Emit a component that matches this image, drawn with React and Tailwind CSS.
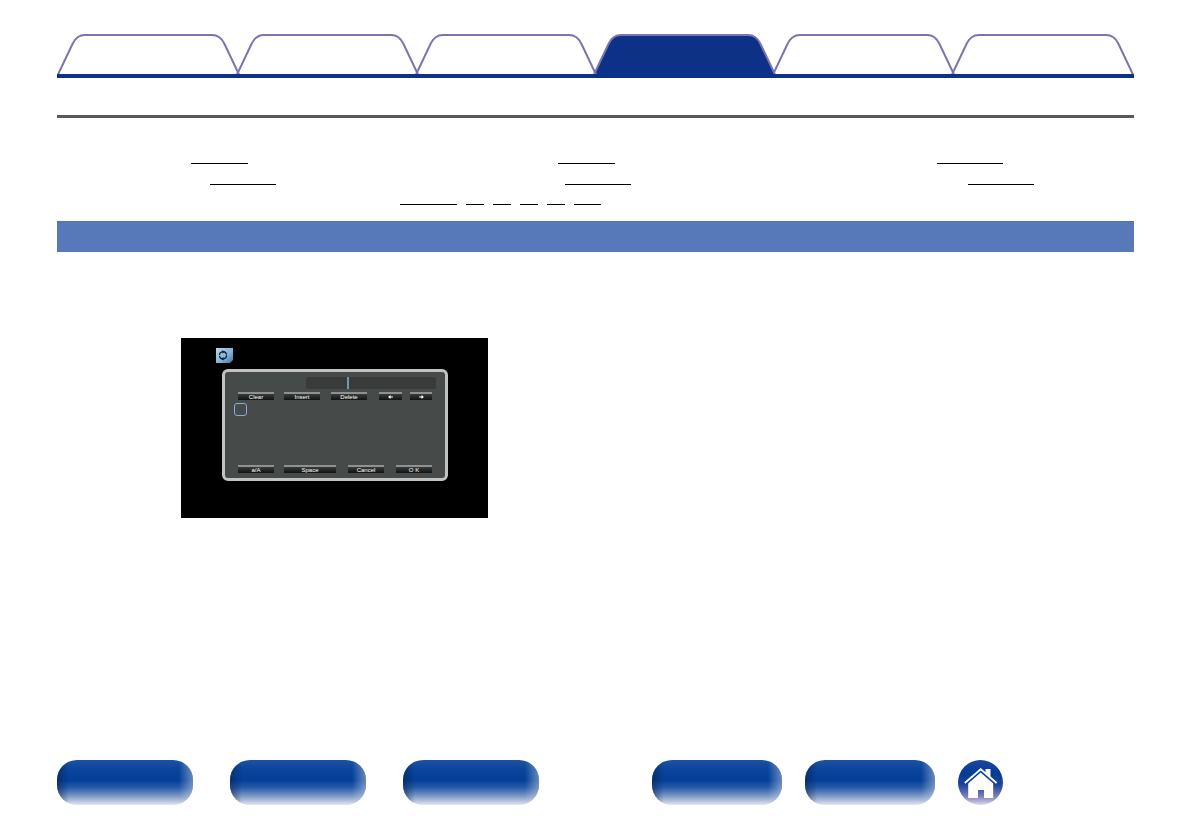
const tabs = [
    { name: 'Contents' },
    { name: 'Connections' },
    { name: 'Playback' },
    { name: 'Settings', active: true },
    { name: 'Tips' },
    { name: 'Appendix' },
];

const links = [
    { name: 'Item 1', className: 'ml-[134px] w-[57px]' },
    { name: 'Item 2', className: 'ml-[142px] w-[57px]' },
    { name: 'Item 3', className: 'ml-[162px] w-[66px]' },
    { name: 'Item 4', className: 'ml-[153px] w-[66px]' },
    { name: 'Item 5', className: 'ml-[149px] w-[66px]' },
    { name: 'Item 6', className: 'ml-[193px] w-[66px]' },
];

const pages = [
    { name: 'Page 1', className: 'w-[57px]' },
    { name: 'Page 2', className: 'w-[18px]' },
    { name: 'Page 3', className: 'w-[18px]' },
    { name: 'Page 4', className: 'w-[18px]' },
    { name: 'Page 5', className: 'w-[18px]' },
    { name: 'Page 6', className: 'w-[27px]' },
];

const TabCap = ({ active, flip }) => (
    <svg className={`h-10 w-7 shrink-0 ${flip ? '-scale-x-100' : ''}`} viewBox="0 0 28 40" fill="none">
        {active && <path d="M1 41 L15.5 10 C18 4.5 21.5 1 28 1 V41 Z" fill="#0c3187" />}
        <path
            d="M1 40.5 L15.5 10 C18 4.5 21.5 1 28 1"
            stroke="#7b74ae"
            strokeWidth="2"
            fill="none"
        />
    </svg>
);

const Tab = ({ name, active }) => (
    <button type="button" aria-label={name} className="-ml-1 flex h-10 flex-1 first:ml-0">
        <TabCap active={active} />
        <span className={`h-full flex-1 border-t-2 border-[#7b74ae] ${active ? 'bg-[#0c3187]' : ''}`} />
        <TabCap active={active} flip />
    </button>
);

const Key = ({ className, label, children }) => (
    <button
        type="button"
        aria-label={label}
        className={`flex h-2 items-center justify-center border-t-2 border-[#8f9190] bg-linear-to-b from-[#3a3c3b] to-[#121413] text-[6px] leading-none whitespace-nowrap text-white ${className}`}
    >
        {children}
    </button>
);

const Arrow = ({ flip }) => (
    <svg className={`h-1 w-[5px] ${flip ? '-scale-x-100' : ''}`} viewBox="0 0 6 5">
        <path d="M0 1.8 H3 V0 L6 2.5 L3 5 V3.2 H0 Z" fill="#fff" />
    </svg>
);

const OnScreenKeyboard = () => (
    <div className="h-[180px] w-[307px] bg-black pt-[10px] font-['Liberation_Sans',sans-serif]">
        <svg className="ml-[35px] h-[15px] w-[17px]" viewBox="0 0 17 15">
            <defs>
                <linearGradient id="badge" x1="0" y1="0" x2="1" y2="1">
                    <stop offset="0" stopColor="#b9d8ee" />
                    <stop offset="0.6" stopColor="#7fb0d6" />
                    <stop offset="1" stopColor="#416f9e" />
                </linearGradient>
            </defs>
            <path d="M0 0 H17 V12 L14 15 H0 Z" fill="url(#badge)" />
            <circle cx="7" cy="7.3" r="3.6" fill="none" stroke="#0c1a28" strokeWidth="1.2" strokeDasharray="4.6 1" />
            <path d="M6 2.2 L9 3.7 L6.5 5.6 Z M8 12.4 L5 10.9 L7.5 9 Z" fill="#0c1a28" />
        </svg>

        <div className="mt-[6px] ml-[41px] flex h-[112px] w-[226px] flex-col rounded-md border-3 border-[#c2c2c4] bg-[#464a48] px-[13px] py-[5px]">
            <div className="-mr-1 ml-[68px] flex h-3 rounded-xs bg-[#393b3b]">
                <span className="ml-[41px] w-[2px] bg-[#6a9bb5]" />
            </div>
            <div className="mt-[3px] flex">
                <Key className="w-9">Clear</Key>
                <Key className="ml-[10px] w-9">Insert</Key>
                <Key className="ml-[11px] w-9">Delete</Key>
                <Key className="ml-3 w-[23px]" label="Left"><Arrow flip /></Key>
                <Key className="ml-2 w-[22px]" label="Right"><Arrow /></Key>
            </div>
            <button type="button" aria-label="Character" className="mt-[3px] -ml-1 h-[13px] w-[13px] rounded-[3px] border border-[#7fb2dc]" />
            <div className="mt-auto flex">
                <Key className="w-9">a/A</Key>
                <Key className="ml-[10px] w-[52px]">Space</Key>
                <Key className="ml-3 w-9">Cancel</Key>
                <Key className="ml-3 w-9">O K</Key>
            </div>
        </div>
    </div>
);

const Pill = ({ name, className }) => (
    <button
        type="button"
        aria-label={name}
        className={`h-[45px] overflow-hidden rounded-[20px] bg-[linear-gradient(to_bottom,#1c52a3_0%,#0a449b_22%,#033f98_45%,#2a5ca9_62%,#7391c3_78%,#b5c1dc_91%,#e4e7f0_100%)] ${className}`}
    >
        <span className="block h-full w-full bg-[linear-gradient(to_right,rgba(10,30,70,0.5)_0px,rgba(10,30,70,0)_12px,rgba(255,255,255,0)_calc(100%-14px),rgba(200,210,228,0.5)_100%)]" />
    </button>
);

const HomeButton = () => (
    <button type="button" aria-label="Home" className="h-[45px] w-[45px]">
        <svg className="h-full w-full" viewBox="0 0 45 45">
            <defs>
                <linearGradient id="home" x1="0" y1="0" x2="0" y2="1">
                    <stop offset="0" stopColor="#1b489c" />
                    <stop offset="0.3" stopColor="#043b94" />
                    <stop offset="0.55" stopColor="#1d439a" />
                    <stop offset="0.8" stopColor="#7b7cb8" />
                    <stop offset="1" stopColor="#dcd9ec" />
                </linearGradient>
            </defs>
            <circle cx="22.5" cy="22.5" r="22.5" fill="url(#home)" />
            <path d="M27.5 9 H32.5 V17.5 L27.5 12.8 Z" fill="#fff" />
            <path d="M6.8 23 L22.7 9.2 L38.6 23" fill="none" stroke="#fff" strokeWidth="1.8" />
            <path d="M22.7 12.4 L35.2 23.4 V38 H26 V30 H20 V38 H10.2 V23.4 Z" fill="#fff" />
        </svg>
    </button>
);

export default function App() {
    return (
        <div className="flex min-h-screen flex-col bg-white px-[57px] pt-[34px] pb-[34px] font-['Liberation_Sans',sans-serif]">
            <nav className="flex border-b-4 border-[#0c3187]">
                {tabs.map((tab) => (
                    <Tab key={tab.name} {...tab} />
                ))}
            </nav>

            <hr className="mt-[37px] border-t-3 border-[#575a58]" />

            <div className="mt-[26px] grid grid-cols-3 gap-y-[1px]">
                {links.map((link) => (
                    <a key={link.name} href="#" aria-label={link.name} className={`block h-5 border-b border-black ${link.className}`} />
                ))}
            </div>
            <div className="flex justify-center gap-[9px] pr-[190px]">
                {pages.map((page) => (
                    <a key={page.name} href="#" aria-label={page.name} className={`block h-5 border-b border-black ${page.className}`} />
                ))}
            </div>

            <div className="mt-4 h-[31px] border-t border-[#4f73b2] bg-[#5779ba]" />

            <main className="mt-[86px] mb-10 pl-[124px]">
                <OnScreenKeyboard />
            </main>

            <footer className="mt-auto flex items-center justify-between pr-[131px]">
                <div className="flex gap-[37px]">
                    <Pill name="Front panel" className="w-[136px]" />
                    <Pill name="Display" className="w-[136px]" />
                    <Pill name="Rear panel" className="w-[136px]" />
                </div>
                <div className="flex gap-[23px]">
                    <Pill name="Remote" className="w-[130px]" />
                    <Pill name="Index" className="w-[130px]" />
                    <HomeButton />
                </div>
            </footer>
        </div>
    );
}
